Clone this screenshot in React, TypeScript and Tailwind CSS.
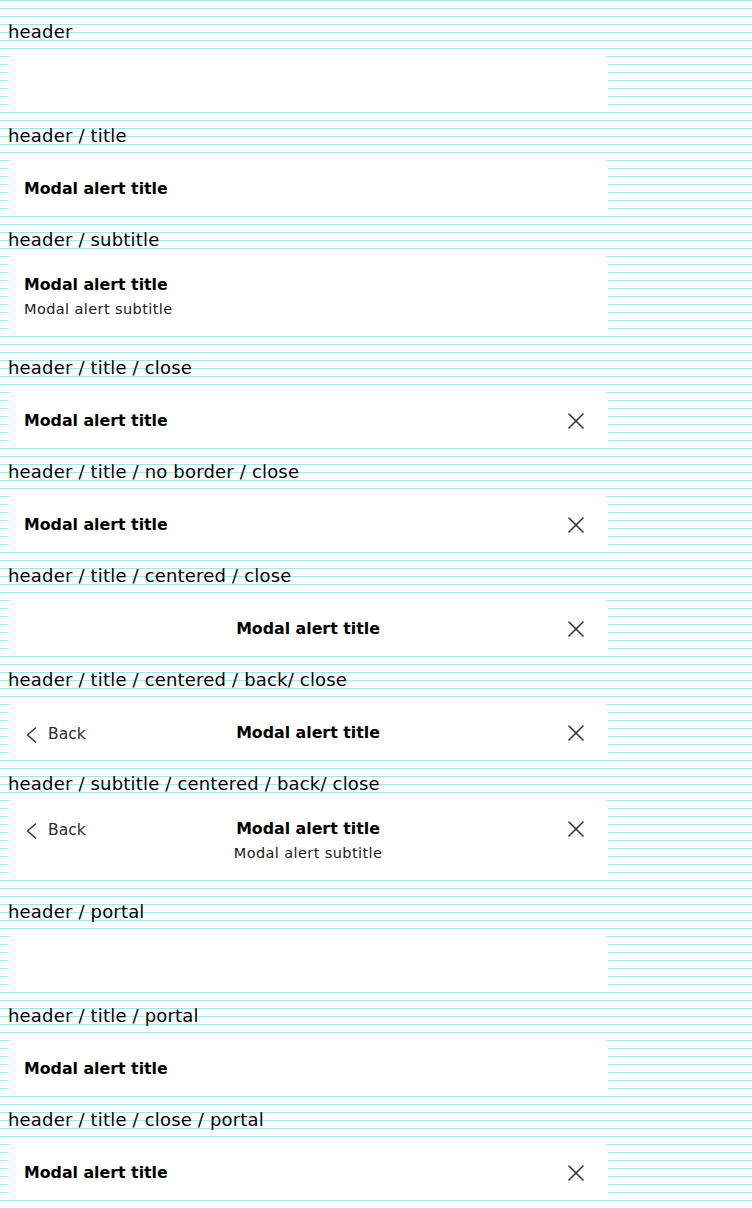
import type { ReactNode } from 'react';

const font = { fontFamily: '"DejaVu Sans", Inter, sans-serif' };

function CloseIcon() {
  return (
    <svg width="16" height="16" viewBox="0 0 16 16" fill="none" className="shrink-0">
      <path d="M1 1L15 15M15 1L1 15" stroke="#2b2b2b" strokeWidth="1.5" strokeLinecap="round" />
    </svg>
  );
}

function BackButton() {
  return (
    <div className="flex items-center text-[15.5px] text-[#2b2b2b]">
      <svg width="16" height="16" viewBox="0 0 16 16" fill="none" className="shrink-0">
        <path d="M11.5 1L3.5 8L11.5 15" stroke="#2b2b2b" strokeWidth="1.4" strokeLinecap="round" strokeLinejoin="round" />
      </svg>
      <span className="ml-2">Back</span>
    </div>
  );
}

function Title({ children }: { children: ReactNode }) {
  return <p className="text-[15.8px] font-bold leading-6 text-black">{children}</p>;
}

function Subtitle({ children }: { children: ReactNode }) {
  return <p className="text-[14.5px] leading-6 tracking-[0.4px] text-[#1a1a1a]">{children}</p>;
}

function Story({ label, tall, children }: { label: string; tall?: boolean; children: ReactNode }) {
  return (
    <section className={tall ? 'mb-5' : 'mb-3'}>
      <h2 className="h-6 text-[18px] leading-6 tracking-[0.18px] text-black">{label}</h2>
      <div className={`w-[600px] rounded-lg bg-white ${tall ? 'mt-[2px] h-[82px]' : 'mt-[10px] h-[58px]'}`}>
        {children}
      </div>
    </section>
  );
}

function TitleRow({ close }: { close?: boolean }) {
  return (
    <div className="flex h-full items-center justify-between pl-4 pr-6 pt-[3px]">
      <Title>Modal alert title</Title>
      {close && <CloseIcon />}
    </div>
  );
}

function CenteredRow({ back }: { back?: boolean }) {
  return (
    <div className="grid h-full grid-cols-[1fr_auto_1fr] items-center px-4 pt-[3px]">
      <div className="pt-[4px]">{back && <BackButton />}</div>
      <Title>Modal alert title</Title>
      <div className="flex justify-end pr-2">
        <CloseIcon />
      </div>
    </div>
  );
}

export default function App() {
  return (
    <div
      className="min-h-screen bg-white bg-[image:repeating-linear-gradient(to_bottom,#7fffff_0px,#7fffff_1px,transparent_1px,transparent_8px)] px-2 pt-5"
      style={font}
    >
      <Story label="header">{null}</Story>

      <Story label="header / title">
        <TitleRow />
      </Story>

      <Story label="header / subtitle" tall>
        <div className="pl-4 pt-[19px]">
          <Title>Modal alert title</Title>
          <Subtitle>Modal alert subtitle</Subtitle>
        </div>
      </Story>

      <Story label="header / title / close">
        <TitleRow close />
      </Story>

      <Story label="header / title / no border / close">
        <TitleRow close />
      </Story>

      <Story label="header / title / centered / close">
        <CenteredRow />
      </Story>

      <Story label="header / title / centered / back/ close">
        <CenteredRow back />
      </Story>

      <Story label="header / subtitle / centered / back/ close" tall>
        <div className="grid grid-cols-[1fr_auto_1fr] items-start px-4 pt-[19px]">
          <div className="pt-[2px]">
            <BackButton />
          </div>
          <div className="text-center">
            <Title>Modal alert title</Title>
            <Subtitle>Modal alert subtitle</Subtitle>
          </div>
          <div className="flex h-6 items-center justify-end pr-2">
            <CloseIcon />
          </div>
        </div>
      </Story>

      <Story label="header / portal">{null}</Story>

      <Story label="header / title / portal">
        <TitleRow />
      </Story>

      <Story label="header / title / close / portal">
        <TitleRow close />
      </Story>
    </div>
  );
}
